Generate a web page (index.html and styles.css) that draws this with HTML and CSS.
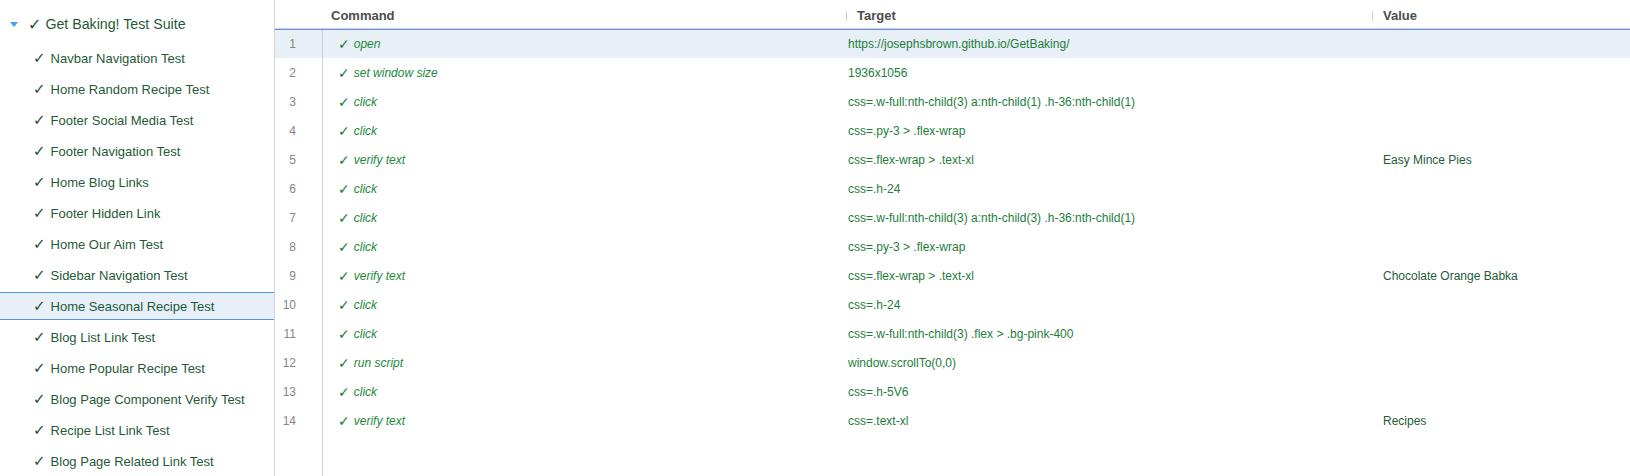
FILE: index.html
```html
<!DOCTYPE html>
<html>
<head>
<meta charset="utf-8">
<link rel="stylesheet" href="styles.css">
</head>
<body>
<aside class="sidebar">
  <div class="suite"><span class="caret"></span><span class="chk">✓</span>Get Baking! Test Suite</div>
  <ul class="tests">
    <li><span class="chk">✓</span>Navbar Navigation Test</li>
    <li><span class="chk">✓</span>Home Random Recipe Test</li>
    <li><span class="chk">✓</span>Footer Social Media Test</li>
    <li><span class="chk">✓</span>Footer Navigation Test</li>
    <li><span class="chk">✓</span>Home Blog Links</li>
    <li><span class="chk">✓</span>Footer Hidden Link</li>
    <li><span class="chk">✓</span>Home Our Aim Test</li>
    <li><span class="chk">✓</span>Sidebar Navigation Test</li>
    <li class="selected"><span class="chk">✓</span>Home Seasonal Recipe Test</li>
    <li><span class="chk">✓</span>Blog List Link Test</li>
    <li><span class="chk">✓</span>Home Popular Recipe Test</li>
    <li><span class="chk">✓</span>Blog Page Component Verify Test</li>
    <li><span class="chk">✓</span>Recipe List Link Test</li>
    <li><span class="chk">✓</span>Blog Page Related Link Test</li>
  </ul>
</aside>
<main class="editor">
  <div class="head row-grid">
    <div></div>
    <div class="h h-first">Command</div>
    <div class="h"><span class="sep"></span>Target</div>
    <div class="h"><span class="sep"></span>Value</div>
  </div>
  <div class="rows">
    <div class="row row-grid selected"><div class="num">1</div><div class="cmd"><span class="chk">✓</span><i>open</i></div><div class="tgt">https://josephsbrown.github.io/GetBaking/</div><div class="val"></div></div>
    <div class="row row-grid"><div class="num">2</div><div class="cmd"><span class="chk">✓</span><i>set window size</i></div><div class="tgt">1936x1056</div><div class="val"></div></div>
    <div class="row row-grid"><div class="num">3</div><div class="cmd"><span class="chk">✓</span><i>click</i></div><div class="tgt">css=.w-full:nth-child(3) a:nth-child(1) .h-36:nth-child(1)</div><div class="val"></div></div>
    <div class="row row-grid"><div class="num">4</div><div class="cmd"><span class="chk">✓</span><i>click</i></div><div class="tgt">css=.py-3 &gt; .flex-wrap</div><div class="val"></div></div>
    <div class="row row-grid"><div class="num">5</div><div class="cmd"><span class="chk">✓</span><i>verify text</i></div><div class="tgt">css=.flex-wrap &gt; .text-xl</div><div class="val">Easy Mince Pies</div></div>
    <div class="row row-grid"><div class="num">6</div><div class="cmd"><span class="chk">✓</span><i>click</i></div><div class="tgt">css=.h-24</div><div class="val"></div></div>
    <div class="row row-grid"><div class="num">7</div><div class="cmd"><span class="chk">✓</span><i>click</i></div><div class="tgt">css=.w-full:nth-child(3) a:nth-child(3) .h-36:nth-child(1)</div><div class="val"></div></div>
    <div class="row row-grid"><div class="num">8</div><div class="cmd"><span class="chk">✓</span><i>click</i></div><div class="tgt">css=.py-3 &gt; .flex-wrap</div><div class="val"></div></div>
    <div class="row row-grid"><div class="num">9</div><div class="cmd"><span class="chk">✓</span><i>verify text</i></div><div class="tgt">css=.flex-wrap &gt; .text-xl</div><div class="val">Chocolate Orange Babka</div></div>
    <div class="row row-grid"><div class="num">10</div><div class="cmd"><span class="chk">✓</span><i>click</i></div><div class="tgt">css=.h-24</div><div class="val"></div></div>
    <div class="row row-grid"><div class="num">11</div><div class="cmd"><span class="chk">✓</span><i>click</i></div><div class="tgt">css=.w-full:nth-child(3) .flex &gt; .bg-pink-400</div><div class="val"></div></div>
    <div class="row row-grid"><div class="num">12</div><div class="cmd"><span class="chk">✓</span><i>run script</i></div><div class="tgt">window.scrollTo(0,0)</div><div class="val"></div></div>
    <div class="row row-grid"><div class="num">13</div><div class="cmd"><span class="chk">✓</span><i>click</i></div><div class="tgt">css=.h-5V6</div><div class="val"></div></div>
    <div class="row row-grid"><div class="num">14</div><div class="cmd"><span class="chk">✓</span><i>verify text</i></div><div class="tgt">css=.text-xl</div><div class="val">Recipes</div></div>
    <div class="filler row-grid"><div class="num"></div><div></div><div></div><div></div></div>
  </div>
</main>
</body>
</html>
```
FILE: styles.css
```css
html, body {
  margin: 0;
  padding: 0;
  height: 100%;
}
body {
  display: flex;
  width: 1630px;
  height: 476px;
  overflow: hidden;
  font-family: "Liberation Sans", Arial, "DejaVu Sans", sans-serif;
  background: #fff;
}
.chk {
  font-family: "DejaVu Sans", sans-serif;
}

/* Sidebar */
.sidebar {
  width: 274px;
  flex: none;
  border-right: 1px solid #d4d4d4;
  overflow: hidden;
}
.suite {
  display: flex;
  align-items: center;
  height: 28px;
  padding: 10px 0 6px 0;
  font-size: 14.2px;
  color: #1f5a38;
}
.caret {
  width: 0;
  height: 0;
  margin-left: 10px;
  margin-right: 10px;
  border-left: 4px solid transparent;
  border-right: 4px solid transparent;
  border-top: 5px solid #4a9cf0;
}
.suite .chk {
  font-size: 16px;
  margin-right: 4px;
  color: #1c4f32;
}
.tests {
  list-style: none;
  margin: 0;
  padding: 0;
}
.tests li {
  display: flex;
  align-items: center;
  height: 26px;
  border-top: 1px solid transparent;
  border-bottom: 1px solid transparent;
  margin-bottom: 3px;
  padding-left: 33px;
  font-size: 13px;
  color: #1f5a38;
  white-space: nowrap;
}
.tests li .chk {
  font-size: 15px;
  margin-right: 5px;
  color: #1c4f32;
}
.tests li.selected {
  background: #e7eff8;
  border-top-color: #5593e6;
  border-bottom-color: #5593e6;
}

/* Editor */
.editor {
  flex: 1;
  display: flex;
  flex-direction: column;
  min-width: 0;
}
.row-grid {
  display: grid;
  grid-template-columns: 48px 523px 526px 1fr;
}
.head {
  height: 28px;
  border-bottom: 1px solid #cfcfcf;
  font-size: 13px;
  font-weight: bold;
  color: #4d4d4d;
  align-items: stretch;
}
.h {
  display: flex;
  align-items: center;
  padding-left: 11px;
  padding-top: 3px;
  position: relative;
}
.h-first {
  padding-left: 8px;
}
.sep {
  position: absolute;
  left: 0;
  top: 11px;
  width: 1px;
  height: 10px;
  background: #cfcfcf;
}
.rows {
  flex: 1;
  display: flex;
  flex-direction: column;
}
.row {
  height: 29px;
  font-size: 12px;
}
.row.selected {
  background: #e8eff7;
  border-top: 1px solid #5b95e5;
  height: 28px;
}
.num {
  display: flex;
  align-items: center;
  justify-content: flex-end;
  padding-right: 26px;
  border-right: 1px solid #cfcfcf;
  color: #8a8580;
  font-size: 12px;
}
.cmd, .tgt, .val {
  display: flex;
  align-items: center;
  white-space: nowrap;
}
.cmd {
  padding-left: 15px;
  color: #1c8a3b;
}
.cmd .chk {
  font-size: 14px;
  margin-right: 4px;
  color: #1a7a36;
}
.cmd i {
  font-style: italic;
}
.tgt {
  padding-left: 2px;
  color: #1d7d3b;
}
.val {
  padding-left: 11px;
  color: #245c38;
}
.filler {
  flex: 1;
}
```
